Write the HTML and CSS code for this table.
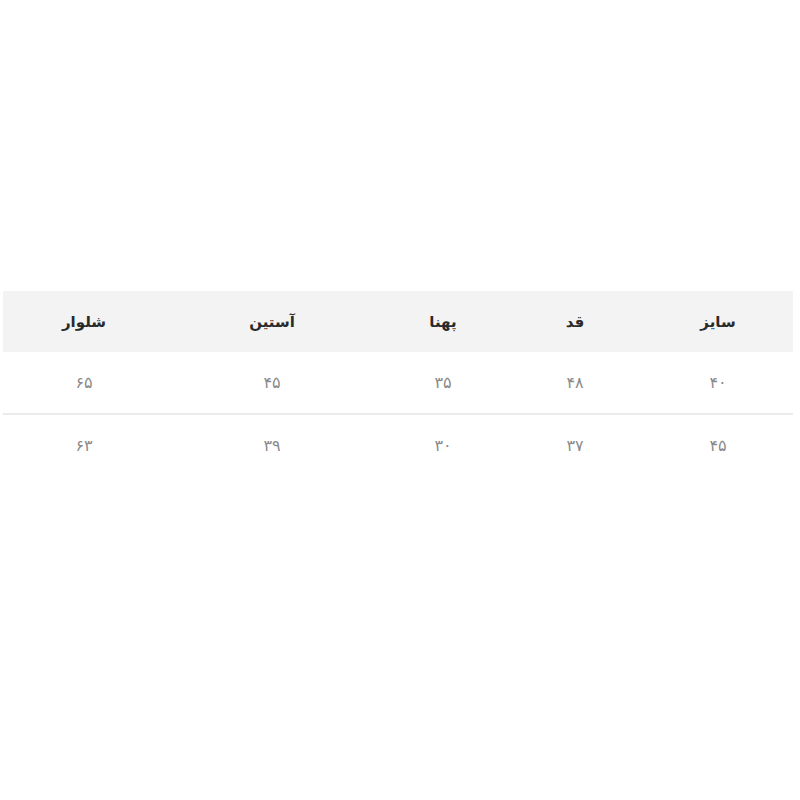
FILE: index.html
```html
<!DOCTYPE html>
<html lang="fa" dir="rtl">
<head>
<meta charset="utf-8">
<link rel="stylesheet" href="styles.css">
</head>
<body>
<div class="page">
  <table class="size-table">
    <colgroup>
      <col class="c1"><col class="c2"><col class="c3"><col class="c4"><col class="c5">
    </colgroup>
    <thead>
      <tr><th>سایز</th><th>قد</th><th>پهنا</th><th>آستین</th><th>شلوار</th></tr>
    </thead>
    <tbody>
      <tr class="first"><td>۴۰</td><td>۴۸</td><td>۳۵</td><td>۴۵</td><td>۶۵</td></tr>
      <tr><td>۴۵</td><td>۳۷</td><td>۳۰</td><td>۳۹</td><td>۶۳</td></tr>
    </tbody>
  </table>
</div>
</body>
</html>
```

FILE: styles.css
```css
html, body {
  margin: 0;
  padding: 0;
  background: #ffffff;
}
.page {
  padding-top: 291px;
  padding-right: 7px;
  padding-left: 3px;
  font-family: "DejaVu Sans", "Noto Sans", sans-serif;
}
.size-table {
  width: 790px;
  border-collapse: collapse;
  table-layout: fixed;
}
.c1 { width: 150px; }
.c2 { width: 136px; }
.c3 { width: 128px; }
.c4 { width: 214px; }
.c5 { width: 162px; }
.size-table th {
  background: #f3f3f3;
  height: 61px;
  padding: 0;
  font-size: 15px;
  font-weight: bold;
  color: #2a2a2a;
  text-align: center;
  vertical-align: middle;
}
.size-table td {
  height: 61px;
  padding: 0;
  font-size: 16px;
  color: #8a8a8a;
  text-align: center;
  vertical-align: middle;
}
.size-table tr.first td {
  border-bottom: 2px solid #ebebeb;
}
```
